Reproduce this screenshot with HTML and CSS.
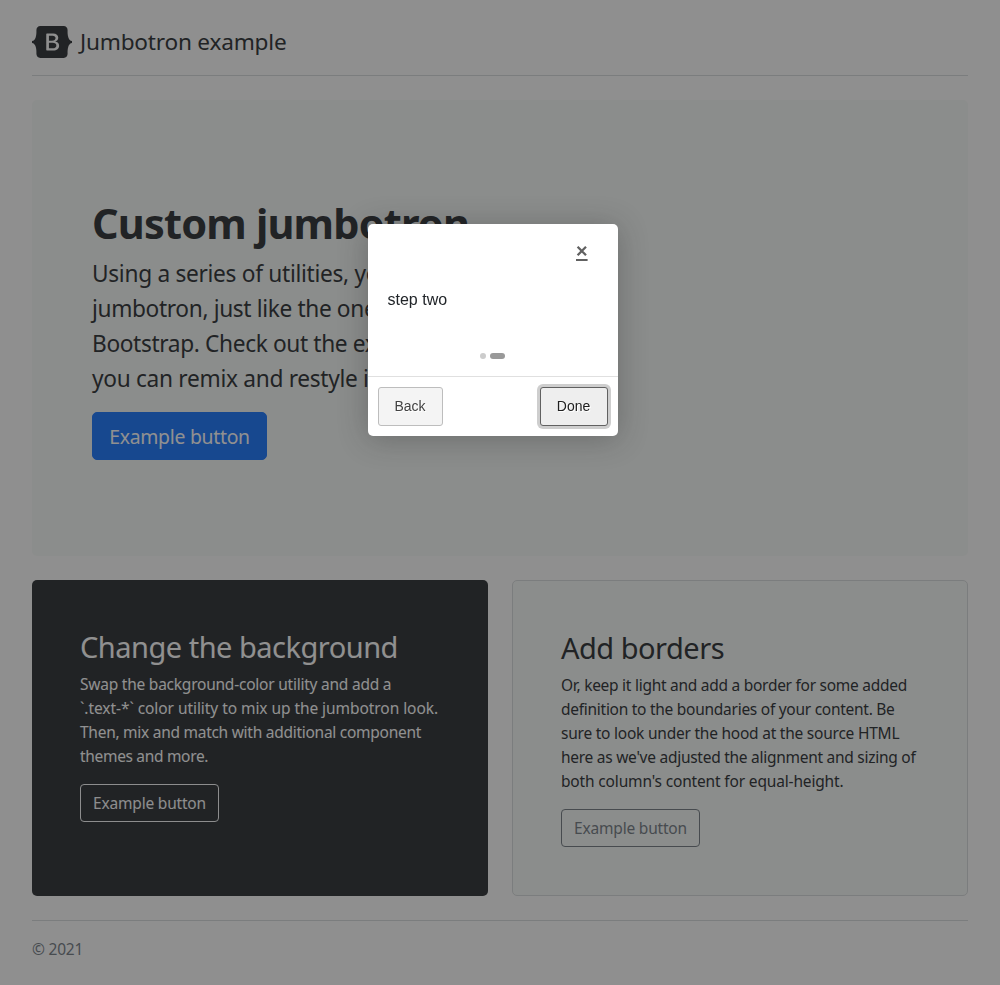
FILE: index.html
```html
<!DOCTYPE html>
<html lang="en">
<head>
<meta charset="utf-8">
<title>Jumbotron example</title>
<link rel="stylesheet" href="styles.css">
</head>
<body>
<main class="container">
  <header class="site-header">
    <svg class="logo" width="40" height="32" viewBox="0 0 118 94" role="img" aria-label="Bootstrap"><path fill-rule="evenodd" clip-rule="evenodd" d="M24.509 0c-6.733 0-11.715 5.893-11.492 12.284.214 6.14-.064 14.092-2.066 20.577C8.943 39.365 5.547 43.485 0 44.014v5.972c5.547.529 8.943 4.649 10.951 11.153 2.002 6.485 2.28 14.437 2.066 20.577C12.794 88.106 17.776 94 24.51 94H93.5c6.733 0 11.714-5.893 11.491-12.284-.214-6.14.064-14.092 2.066-20.577 2.009-6.504 5.396-10.624 10.943-11.153v-5.972c-5.547-.529-8.934-4.649-10.943-11.153-2.002-6.484-2.28-14.437-2.066-20.577C105.214 5.894 100.233 0 93.5 0H24.508zM80 57.863C80 66.663 73.436 72 62.543 72H44a2 2 0 01-2-2V24a2 2 0 012-2h18.437c9.083 0 15.044 4.92 15.044 12.474 0 5.302-4.01 10.049-9.119 10.88v.277C75.317 46.394 80 51.21 80 57.863zM60.521 28.34H49.948v14.934h8.905c6.884 0 10.68-2.772 10.68-7.727 0-4.643-3.264-7.207-9.012-7.207zM49.948 49.2v16.458H60.91c7.167 0 10.964-2.876 10.964-8.281 0-5.406-3.903-8.178-11.425-8.178H49.948z"/></svg>
    <span class="brand">Jumbotron example</span>
  </header>

  <section class="jumbotron">
    <h1 class="hero-title">Custom jumbotron</h1>
    <p class="lead"><span class="lead-snug">Using a series of utilities, you can create this</span><br>jumbotron, just like the one in previous versions of<br>Bootstrap. Check out the examples below for how<br><span class="lead-snug">you can remix and restyle it to your liking.</span></p>
    <button class="btn btn-primary" type="button">Example button</button>
  </section>

  <div class="cards">
    <section class="card card-dark">
      <h2 class="card-title">Change the background</h2>
      <p class="card-text"><span class="line-snug">Swap the background-color utility and add a</span><br><span class="line-loose">`.text-*` color utility to mix up the jumbotron look.</span><br>Then, mix and match with additional component<br><span class="line-tight">themes and more.</span></p>
      <button class="btn btn-outline" type="button">Example button</button>
    </section>
    <section class="card card-light">
      <h2 class="card-title">Add borders</h2>
      <p class="card-text">Or, keep it light and add a border for some added<br>definition to the boundaries of your content. Be<br><span class="line-snug">sure to look under the hood at the source HTML</span><br>here as we've adjusted the alignment and sizing of<br><span class="line-open">both column's content for equal-height.</span></p>
      <button class="btn btn-outline" type="button">Example button</button>
    </section>
  </div>

  <footer class="site-footer">© 2021</footer>
</main>

<div class="overlay"></div>
<div class="tour" role="dialog">
  <div class="tour-header">
    <a class="tour-close" role="button" aria-label="Close"><svg width="12" height="16" viewBox="0 0 12 16"><path d="M1.6 1.8 10 10.2M10 1.8 1.6 10.2" stroke="#616161" stroke-width="2.3"/><path d="M0 15h11.6" stroke="#616161" stroke-width="2"/></svg></a>
  </div>
  <div class="tour-text">step two</div>
  <div class="tour-bullets"><span class="bullet"></span><span class="bullet active"></span></div>
  <div class="tour-buttons">
    <a class="tour-btn">Back</a>
    <a class="tour-btn focused">Done</a>
  </div>
</div>
</body>
</html>
```
FILE: styles.css
```css
* { box-sizing: border-box; }
body {
  margin: 0;
  background: #fcfcfc;
  color: #212529;
  font-family: "Noto Sans", "Open Sans", sans-serif;
  font-size: 16px;
  line-height: 24px;
  height: 985px;
  overflow: hidden;
}
h1, h2, p { margin: 0; white-space: nowrap; }
.container { padding: 0 32px; }
.site-header {
  display: flex;
  align-items: center;
  gap: 8px;
  height: 76px;
  padding: 24px 0 15px;
  border-bottom: 1px solid #d5d9db;
  margin-bottom: 24px;
}
.logo { fill: #212529; }
.brand { font-size: 22.6px; line-height: 36px; letter-spacing: -.2px; }

.jumbotron {
  height: 456px;
  padding: 96px 60px;
  background: #f5f8f6;
  border-radius: 5px;
  margin-bottom: 24px;
}
.hero-title { font-size: 41.5px; line-height: 54px; font-weight: 700; letter-spacing: -.82px; margin-bottom: 6px; }
.lead { font-size: 22.7px; line-height: 35px; letter-spacing: -.36px; margin-bottom: 16px; }
.lead-snug { letter-spacing: -.3px; }

.btn {
  display: block;
  font: inherit;
  font-size: 15.5px;
  letter-spacing: -.2px;
  border: 1px solid #6c757d;
  border-radius: 4px;
  background: none;
  color: #6c757d;
  text-align: center;
  padding: 0;
  white-space: nowrap;
}
.btn-primary {
  width: 175px;
  height: 48px;
  padding-top: 2px;
  font-size: 19.4px;
  letter-spacing: -.28px;
  color: #fff;
  background: #0d6efd;
  border-color: #0d6efd;
  border-radius: 5px;
}
.btn-outline { width: 139px; height: 38px; }

.cards { display: grid; grid-template-columns: repeat(2, minmax(0, 1fr)); gap: 24px; margin-bottom: 24px; }
.card { height: 316px; padding: 48px; border-radius: 5px; }
.card-dark { background: #212529; color: #fff; }
.card-dark .btn { color: #f8f9fa; border-color: #f8f9fa; }
.card-light { background: #f5f8f6; border: 1px solid #d5d9db; }
.card-title { font-size: 29px; line-height: 38px; font-weight: 400; letter-spacing: -.5px; margin-bottom: 6px; }
.card-text { font-size: 15.5px; letter-spacing: -.27px; margin-bottom: 16px; }
.line-snug { letter-spacing: -.23px; }
.line-loose { letter-spacing: -.06px; }
.line-open { letter-spacing: -.16px; }
.line-tight { letter-spacing: -.32px; }

.site-footer { border-top: 1px solid #d5d9db; padding-top: 16px; color: #6c757d; font-size: 15.5px; letter-spacing: -.2px; }

.overlay { position: fixed; inset: 0; background: rgba(33, 33, 33, .5); }
.tour {
  position: absolute;
  left: 368px;
  top: 224px;
  width: 250px;
  height: 212px;
  display: flex;
  flex-direction: column;
  background: #fff;
  border-radius: 5px;
  box-shadow: 0 3px 30px rgba(33, 33, 33, .3);
  font-family: "Liberation Sans", Arial, sans-serif;
}
.tour-header { display: flex; justify-content: flex-end; height: 46px; padding: 21px 30.5px 0 0; }
.tour-close { line-height: 0; }
.tour-text { height: 60px; padding: 18px 19.5px; }
.tour-bullets {
  display: flex;
  justify-content: center;
  align-items: center;
  gap: 4px;
  height: 46px;
  padding: 6px 1px 0 0;
}
.bullet { width: 6px; height: 6px; border-radius: 3px; background: #ccc; }
.bullet.active { width: 15px; background: #999; }
.tour-buttons {
  display: flex;
  justify-content: space-between;
  border-top: 1px solid #e0e0e0;
  padding: 10px;
}
.tour-btn {
  width: 65px;
  height: 39px;
  padding-right: 1px;
  border: 1px solid #bdbdbd;
  border-radius: 3px;
  background: #f4f4f4;
  color: #424242;
  font-size: 14px;
  line-height: 37px;
  text-align: center;
  text-shadow: 1px 1px 0 #fff;
}
.tour-btn.focused {
  width: 68px;
  border-color: #616161;
  background: #eee;
  color: #212121;
  box-shadow: 0 0 0 3px rgba(158, 158, 158, .5);
}
```
